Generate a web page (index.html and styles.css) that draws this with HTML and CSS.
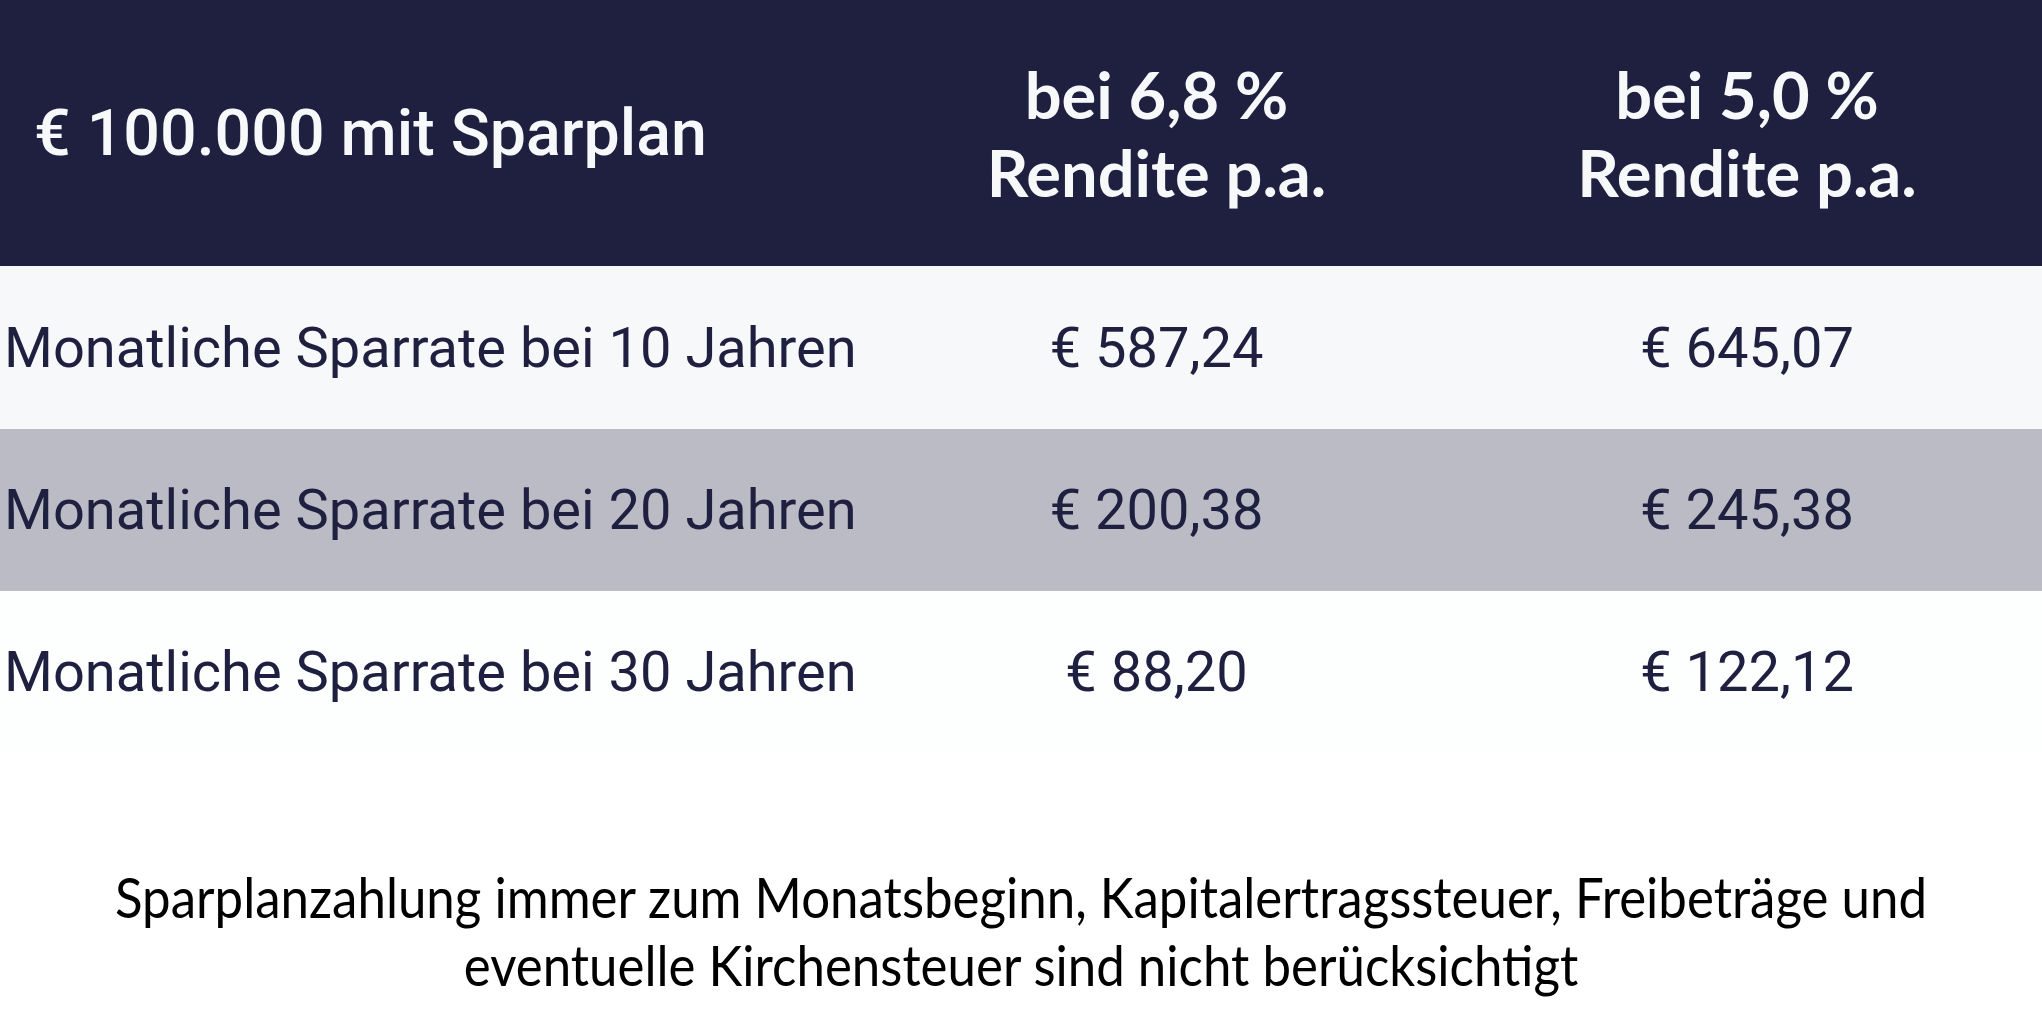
FILE: index.html
```html
<!DOCTYPE html>
<html lang="de">
<head>
<meta charset="utf-8">
<title>€ 100.000 mit Sparplan</title>
<link rel="stylesheet" href="styles.css">
</head>
<body>
<main class="page">
  <section class="table">
    <div class="row head">
      <div class="cell first title">€ 100.000 mit Sparplan</div>
      <div class="cell rate">bei 6,8 %<br>Rendite p.a.</div>
      <div class="cell rate">bei 5,0 %<br>Rendite p.a.</div>
    </div>
    <div class="row light">
      <div class="cell first label">Monatliche Sparrate bei 10 Jahren</div>
      <div class="cell value">€ 587,24</div>
      <div class="cell value">€ 645,07</div>
    </div>
    <div class="row grey">
      <div class="cell first label">Monatliche Sparrate bei 20 Jahren</div>
      <div class="cell value">€ 200,38</div>
      <div class="cell value">€ 245,38</div>
    </div>
    <div class="row white">
      <div class="cell first label">Monatliche Sparrate bei 30 Jahren</div>
      <div class="cell value">€ 88,20</div>
      <div class="cell value">€ 122,12</div>
    </div>
  </section>
  <p class="note">Sparplanzahlung immer zum Monatsbeginn, Kapitalertragssteuer, Freibeträge und<br>eventuelle Kirchensteuer sind nicht berücksichtigt</p>
</main>
</body>
</html>
```
FILE: styles.css
```css
html, body {
  margin: 0;
  padding: 0;
  background: #ffffff;
}
.page {
  width: 2042px;
  height: 1032px;
  overflow: hidden;
}
.table {
  display: flex;
  flex-direction: column;
}
.row {
  display: grid;
  grid-template-columns: 861px 591px 590px;
  align-items: center;
  height: 162px;
  color: #1f2040;
  font-family: Roboto, "Liberation Sans", sans-serif;
  font-size: 56px;
}
.row.head {
  height: 266px;
  background: #1f2040;
  color: #f7f8fa;
}
.row.light { height: 163px; background: #f7f8fa; }
.row.grey { background: #bbbbc5; }
.row.white { height: 161px; background: #fdfefe; }
.cell { text-align: center; }
.cell.first { text-align: left; }
.title {
  padding-left: 34px;
  font-weight: 500;
  font-size: 64.5px;
}
.label {
  padding-left: 4px;
  white-space: nowrap;
}
.rate {
  font-family: Lato, "Open Sans", sans-serif;
  font-weight: 700;
  font-size: 65px;
  line-height: 78px;
}
.note {
  margin: 110px 0 0;
  text-align: center;
  font-family: Lato, "Open Sans", sans-serif;
  font-size: 57px;
  line-height: 68px;
  color: #000000;
  transform: scaleX(0.895);
  transform-origin: 1021px 0;
}
```
